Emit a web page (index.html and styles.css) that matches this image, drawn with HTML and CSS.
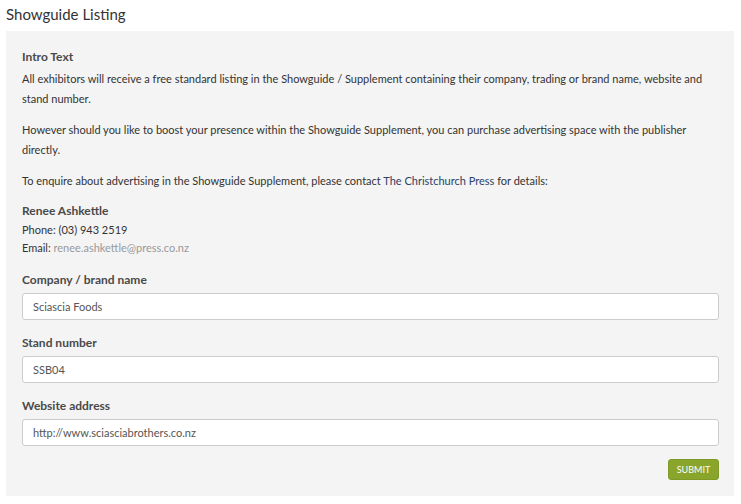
FILE: index.html
```html
<!DOCTYPE html>
<html lang="en">

<head>
  <meta charset="UTF-8">
  <title>Showguide Listing</title>
  <link rel="stylesheet" href="styles.css">
</head>

<body>
  <h2 class="title">Showguide Listing</h2>
  <form class="panel">
    <h4 class="label">Intro Text</h4>
    <p>All exhibitors will receive a free standard listing in the Showguide / Supplement containing their company, trading or brand name, website and stand number.</p>
    <p>However should you like to boost your presence within the Showguide Supplement, you can purchase advertising space with the publisher directly.</p>
    <p>To enquire about advertising in the Showguide Supplement, please contact <span class="press">The Christchurch Press</span> for details:</p>
    <div class="contact">
      <strong>Renee Ashkettle</strong>
      <div>Phone: (03) 943 2519</div>
      <div>Email: <a href="#">renee.ashkettle@press.co.nz</a></div>
    </div>

    <label class="field">
      <span class="label">Company / brand name</span>
      <input type="text" value="Sciascia Foods">
    </label>
    <label class="field">
      <span class="label">Stand number</span>
      <input type="text" value="SSB04">
    </label>
    <label class="field">
      <span class="label">Website address</span>
      <input type="text" value="http://www.sciasciabrothers.co.nz">
    </label>

    <div class="actions">
      <button type="button" class="btn">Submit</button>
    </div>
  </form>
</body>

</html>
```

FILE: styles.css
```css
body {
  margin: 0;
  padding: 0 7px 0 6px;
  font-family: Lato, "Open Sans", sans-serif;
  font-size: 11px;
  color: #333;
  background: #fff;
}

.title {
  margin: 0;
  height: 31px;
  line-height: 29px;
  font-size: 15px;
  font-weight: normal;
  color: #333;
}

.panel {
  background: #f4f4f4;
  padding: 17px 15px 16px 16px;
}

.label {
  display: block;
  margin: 0 0 4px;
  font-size: 12px;
  font-weight: bold;
  color: #4a4a4a;
  line-height: 17px;
}

p {
  margin: 0 0 11px;
  line-height: 20px;
}

.press {
  color: #2c4266;
}

.contact {
  line-height: 18.5px;
  margin: 0 0 13px;
}

.contact strong {
  display: block;
  font-size: 12px;
  color: #4a4a4a;
}

.contact a {
  color: #999;
  text-decoration: none;
}

.field {
  display: block;
  margin-bottom: 14px;
}

.field .label {
  margin-bottom: 5px;
}

.field input {
  display: block;
  width: 100%;
  box-sizing: border-box;
  height: 27px;
  padding: 0 10px;
  border: 1px solid #ccc;
  border-radius: 3px;
  background: #fff;
  font-family: inherit;
  font-size: 11px;
  color: #555;
}

.actions {
  display: flex;
  justify-content: flex-end;
  margin-top: -1px;
}

.btn {
  background: #89a52b;
  border: 1px solid #7f9a24;
  border-radius: 3px;
  color: #fff;
  font-family: inherit;
  font-size: 9px;
  text-transform: uppercase;
  height: 21px;
  width: 51px;
  padding: 0;
}
```
